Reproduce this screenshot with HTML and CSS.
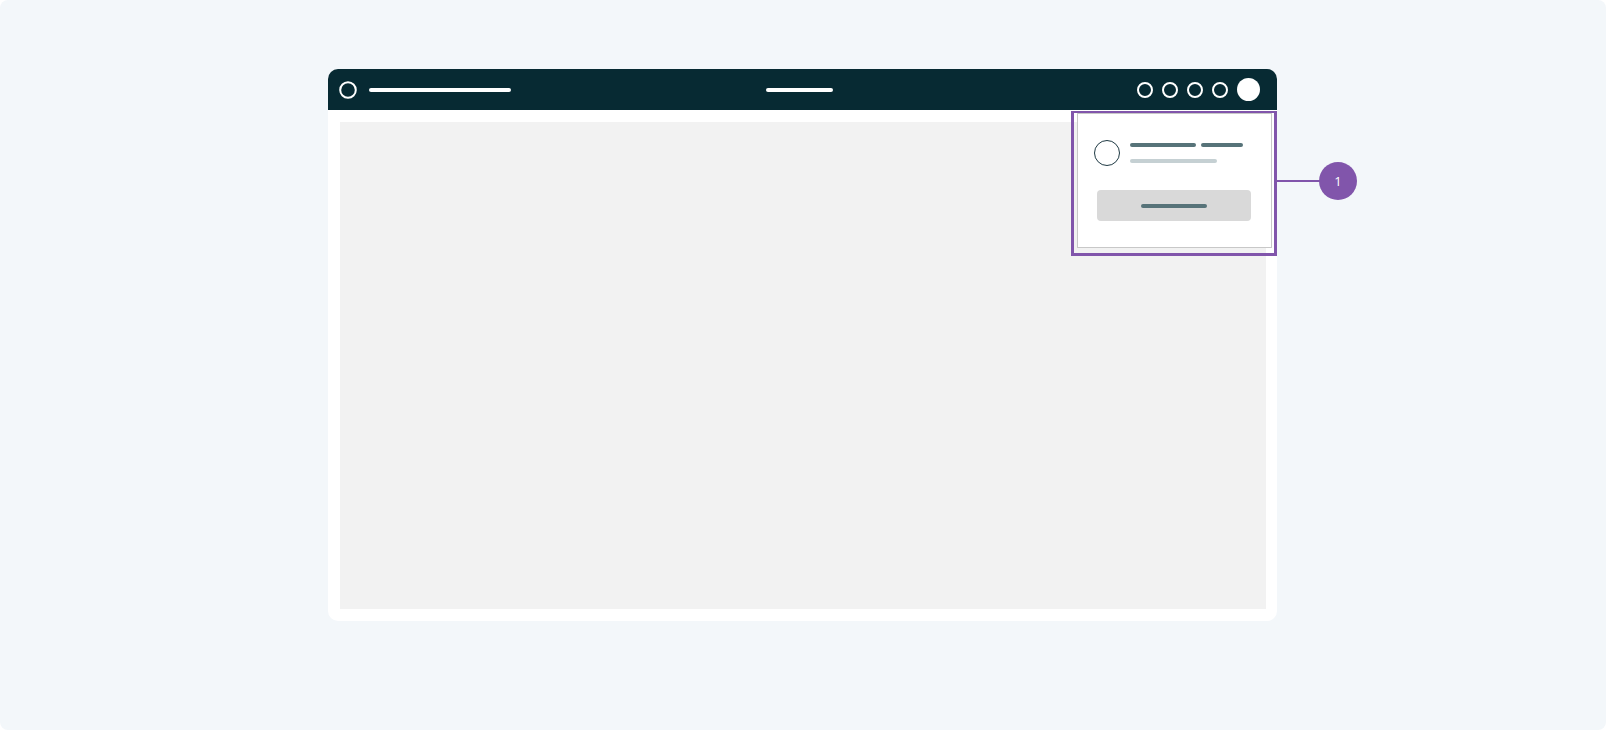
FILE: index.html
```html
<!DOCTYPE html>
<html lang="en">
<head>
    <meta charset="UTF-8">
    <meta name="viewport" content="width=device-width, initial-scale=1.0">
    <title>Header panel</title>
    <link rel="stylesheet" href="styles.css">
</head>
<body>
    <div class="canvas">
        <div class="frame">
            <div class="topbar">
                <div class="topbar-left">
                    <svg class="logo" width="18" height="18" viewBox="0 0 18 18">
                        <circle cx="9" cy="9" r="7.8" fill="none" stroke="#fff" stroke-width="2"/>
                    </svg>
                    <span class="bar bar-title"></span>
                </div>
                <span class="bar bar-center"></span>
                <div class="topbar-right">
                    <span class="icon"></span>
                    <span class="icon"></span>
                    <span class="icon"></span>
                    <span class="icon"></span>
                    <span class="avatar"></span>
                </div>
            </div>
            <div class="content">
                <div class="content-inner"></div>
            </div>

            <!-- highlighted dropdown panel -->
            <div class="highlight">
                <div class="panel">
                    <div class="panel-user">
                        <span class="panel-avatar"></span>
                        <div class="panel-lines">
                            <div class="line-row">
                                <span class="line line-name"></span>
                                <span class="line line-role"></span>
                            </div>
                            <span class="line line-mail"></span>
                        </div>
                    </div>
                    <div class="panel-button"><span class="line line-btn"></span></div>
                </div>
            </div>
            <div class="connector"></div>
            <div class="badge">1</div>
        </div>
    </div>
</body>
</html>
```

FILE: styles.css
```css
body {
    margin: 0;
    background: #ffffff;
    font-family: "Open Sans", "Liberation Sans", sans-serif;
}
.canvas {
    width: 1606px;
    height: 730px;
    background: #f3f7fa;
    border-radius: 8px;
    padding: 69px 0 0 328px;
    box-sizing: border-box;
}
.frame {
    position: relative;
    width: 949px;
    height: 552px;
    display: flex;
    flex-direction: column;
    background: #ffffff;
    border-radius: 10px;
}
.topbar {
    height: 41px;
    background: #072a33;
    border-radius: 10px 10px 0 0;
    display: grid;
    grid-template-columns: 1fr auto 1fr;
    align-items: center;
    padding: 0 17px 0 11px;
}
.topbar-left {
    display: flex;
    align-items: center;
    gap: 12px;
}
.logo {
    display: block;
}
.bar {
    display: block;
    height: 4px;
    border-radius: 2px;
    background: #ffffff;
}
.bar-title {
    width: 142px;
}
.bar-center {
    width: 67px;
}
.topbar-right {
    display: flex;
    justify-content: flex-end;
    align-items: center;
    gap: 9px;
}
.icon {
    width: 12px;
    height: 12px;
    border: 2px solid #ffffff;
    border-radius: 50%;
}
.avatar {
    width: 23px;
    height: 23px;
    border-radius: 50%;
    background: #ffffff;
}
.content {
    flex: 1;
    display: flex;
    padding: 12px 11px 12px 12px;
}
.content-inner {
    flex: 1;
    background: #f2f2f2;
}
.highlight {
    position: absolute;
    top: 42px;
    right: 0;
    width: 206px;
    height: 145px;
    box-sizing: border-box;
    border: 3px solid #8155ab;
    border-top-width: 2px;
    padding: 0 2px 5px 3px;
    display: flex;
}
.panel {
    flex: 1;
    background: #ffffff;
    border: 1.5px solid #c8c8c8;
    padding: 26px 20px 0 16px;
}
.panel-user {
    display: flex;
    align-items: center;
    gap: 10px;
}
.panel-avatar {
    width: 24px;
    height: 24px;
    border: 1.3px solid #1f3a44;
    border-radius: 50%;
}
.panel-lines {
    display: flex;
    flex-direction: column;
    gap: 12px;
}
.line-row {
    display: flex;
    gap: 5px;
}
.line {
    display: block;
    height: 4px;
    border-radius: 2px;
    background: #577379;
}
.line-name {
    width: 66px;
}
.line-role {
    width: 42px;
}
.line-mail {
    width: 87px;
    background: #c5d0d3;
}
.panel-button {
    margin: 24px 0 0 3px;
    height: 31px;
    border-radius: 4px;
    background: #d9d9d9;
    display: flex;
    justify-content: center;
    align-items: center;
}
.line-btn {
    width: 66px;
}
.connector {
    position: absolute;
    top: 111px;
    left: 949px;
    width: 45px;
    height: 2px;
    background: #8155ab;
}
.badge {
    position: absolute;
    top: 93px;
    left: 991px;
    width: 38px;
    height: 38px;
    border-radius: 50%;
    background: #8155ab;
    color: #ffffff;
    font-size: 13px;
    display: flex;
    justify-content: center;
    align-items: center;
}
```
